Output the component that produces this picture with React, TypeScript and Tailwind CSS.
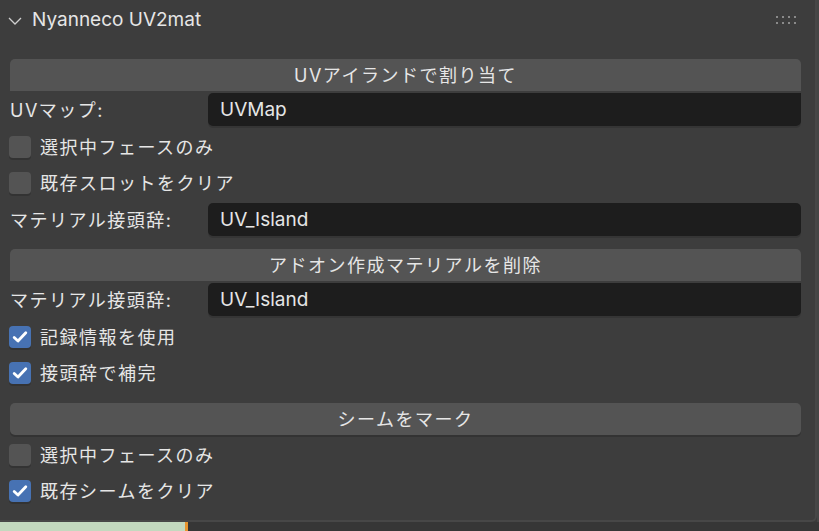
import React from 'react';

const font = "font-['Inter','Noto_Sans_CJK_JP',sans-serif]";

const SectionButton: React.FC<{ label: string; joined?: boolean; className?: string }> = ({ label, joined, className }) => (
    <div
        className={`h-[32px] bg-[#545454] flex items-center justify-center text-[18px] tracking-[1.5px] text-[#e6e6e6] ${
            joined ? 'rounded-t-[5px]' : 'rounded-[5px] shadow-[0_2px_0_#333333]'
        } ${className ?? ''}`}
    >
        {label}
    </div>
);

const Field: React.FC<{ label: string; value: string; joined?: boolean; className?: string }> = ({ label, value, joined, className }) => (
    <div className={`flex items-center h-[33px] ${className ?? ''}`}>
        <div className="w-[198px] text-[18px] tracking-[1.5px] text-[#e6e6e6] pt-[2px]">{label}</div>
        <div
            className={`flex-1 h-full bg-[#1d1d1d] flex items-center pl-[12px] pt-[1px] text-[19px] text-[#e6e6e6] shadow-[0_2px_0_#353535] ${
                joined ? 'rounded-b-[5px] rounded-tl-[5px]' : 'rounded-[5px]'
            }`}
        >
            {value}
        </div>
    </div>
);

const Checkbox: React.FC<{ label: string; checked?: boolean; className?: string }> = ({ label, checked, className }) => (
    <div className={`h-[36px] flex items-center ${className ?? ''}`}>
        <div
            className={`w-[22px] h-[22px] -ml-[1px] rounded-[4px] flex items-center justify-center shadow-[0_2px_0_#333333] ${
                checked ? 'bg-[#4772b3]' : 'bg-[#545454]'
            }`}
        >
            {checked && (
                <svg width="18" height="18" viewBox="0 0 18 18" fill="none">
                    <path d="M3.2 9.4 L7 13 L14.8 4.8" stroke="#ffffff" strokeWidth="2.8" strokeLinecap="round" strokeLinejoin="round" />
                </svg>
            )}
        </div>
        <span className="ml-[9px] pt-[1px] text-[18px] tracking-[1.5px] text-[#e6e6e6]">{label}</span>
    </div>
);

export default function App() {
    return (
        <div className={`w-[819px] h-[531px] bg-[#3a3a3a] overflow-hidden flex flex-col ${font}`}>
            <div className="flex">
                {/* Panel */}
                <div className="w-[817px] h-[522px] bg-[#3d3d3d] rounded-br-[6px] border-r-[2px] border-b-[2px] border-[#474747] flex flex-col">
                    {/* Header */}
                    <div className="h-[40px] flex items-center pl-[8px] pr-[19px]">
                        <svg width="14" height="10" viewBox="0 0 14 10" fill="none" className="mt-[1px]">
                            <path d="M1 2 L7 8 L13 2" stroke="#cfcfcf" strokeWidth="1.3" />
                        </svg>
                        <span className="ml-[10px] text-[19px] text-[#e6e6e6]">Nyanneco UV2mat</span>
                        <div className="ml-auto grid grid-cols-4 gap-x-[4px] gap-y-[4px]">
                            {Array.from({ length: 8 }).map((_, i) => (
                                <span key={i} className="w-[2px] h-[2px] bg-[#8a8a8a]" />
                            ))}
                        </div>
                    </div>

                    {/* Content */}
                    <div className="pl-[10px] pr-[14px] pt-[19px] flex flex-col">
                        <SectionButton label="UVアイランドで割り当て" joined />
                        <Field label="UVマップ:" value="UVMap" joined className="mt-[2px]" />
                        <Checkbox label="選択中フェースのみ" className="mt-[3px]" />
                        <Checkbox label="既存スロットをクリア" />
                        <Field label="マテリアル接頭辞:" value="UV_Island" className="mt-[2px]" />

                        <SectionButton label="アドオン作成マテリアルを削除" joined className="mt-[13px]" />
                        <Field label="マテリアル接頭辞:" value="UV_Island" joined className="mt-[2px]" />
                        <Checkbox label="記録情報を使用" checked className="mt-[3px]" />
                        <Checkbox label="接頭辞で補完" checked />

                        <SectionButton label="シームをマーク" className="mt-[12px]" />
                        <Checkbox label="選択中フェースのみ" className="mt-[2px]" />
                        <Checkbox label="既存シームをクリア" checked />
                    </div>
                </div>
                <div className="flex-1 bg-[#454545]" />
            </div>

            {/* Viewport strip below the panel */}
            <div className="flex-1 flex">
                <div className="w-[185px] bg-[#c3d9bf]" />
                <div className="w-[3px] bg-[#e8952f]" />
                <div className="flex-1 bg-[#363636]" />
            </div>
        </div>
    );
}
